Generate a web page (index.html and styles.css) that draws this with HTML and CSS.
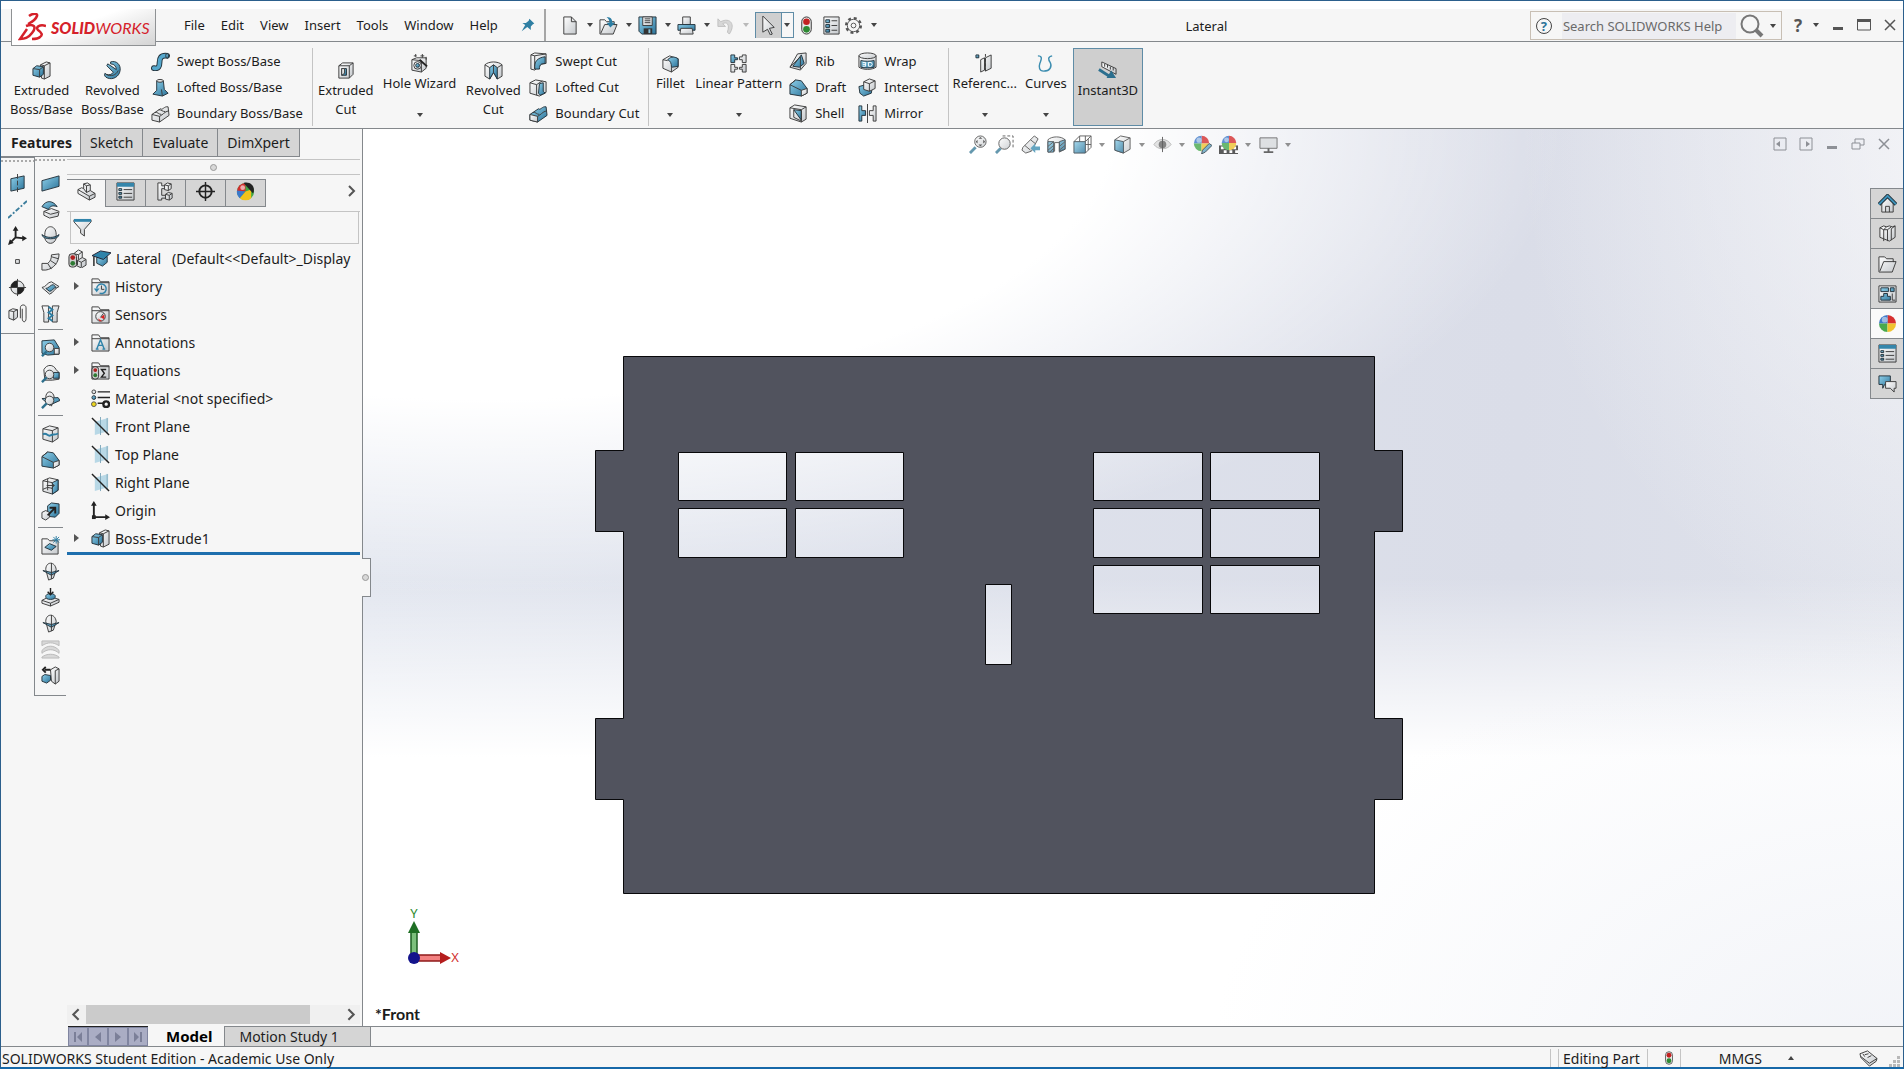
FILE: index.html
```html
<!DOCTYPE html>
<html lang="en">
<head>
    <meta charset="UTF-8">
    <meta name="viewport" content="width=device-width, initial-scale=1.0">
    <title>SOLIDWORKS - Lateral</title>
    <link rel="stylesheet" href="styles.css">
</head>
<body>
    <!-- icon sprite -->
    <svg class="sprite" aria-hidden="true">
        <linearGradient id="steel" x1="0" y1="0" x2="1" y2="1"><stop offset="0" stop-color="#8fd0ea"/><stop offset="1" stop-color="#2b7399"/></linearGradient>
        <linearGradient id="silver" x1="0" y1="0" x2="1" y2="1"><stop offset="0" stop-color="#fff"/><stop offset="1" stop-color="#c4c8cc"/></linearGradient>

        <symbol id="i-extrude" viewBox="0 0 20 20"><path class="w" d="M9 4l6-3 4 1v14l-6 3-3-1z"/><path class="k" d="M13 19V5l6-3M13 5L9 4"/><path class="b" d="M1 8l4-3 7 1v8l-4 3-7-2z"/><path class="k" d="M1 8l7 1v8M8 9l4-3"/></symbol>
        <symbol id="i-revolve" viewBox="0 0 20 20"><path class="b" d="M8 1c6-2 11 3 10 9-1 7-8 10-13 8-3-1-4-3-3-5 2 2 6 2 8 0 1-1 1-2 0-2L4 5l1-2 9 6c0-3-2-6-6-6z"/><path class="k" d="M3 14c5 3 11 1 13-4"/></symbol>
        <symbol id="i-sweep" viewBox="0 0 20 20"><path d="M3 17c5 1 6-2 6-6s1-8 8-7" fill="none" stroke="#24333c" stroke-width="6" stroke-linecap="round"/><path d="M3 17c5 1 6-2 6-6s1-8 8-7" fill="none" stroke="#55a7cc" stroke-width="4" stroke-linecap="round"/><ellipse class="b" cx="17" cy="4" rx="1.500" ry="2.500"/></symbol>
        <symbol id="i-loft" viewBox="0 0 20 20"><path class="b" d="M6 3h7l1 9 4 4-6 3-10-2 4-4z"/><ellipse class="w" cx="9.500" cy="3" rx="3.500" ry="1.500"/><path class="k" d="M12 19l-1-7"/></symbol>
        <symbol id="i-boundary" viewBox="0 0 20 20"><path class="w" d="M1 11l9-6c2 2 4-3 8-2l1 9-10 7-8-2z"/><path class="k" d="M1 11l8 2v6M9 13c3-1 5-5 10-6M4 9c3-1 4 2 7 2M8 6c3 0 4 2 7 2"/></symbol>
        <symbol id="i-boundary-cut" viewBox="0 0 20 20"><path class="b" d="M1 11l9-6c2 2 4-3 8-2l1 9-10 7-8-2z"/><path class="w" d="M1 11l8 2v6l-8-2z"/><path class="k" d="M9 13c3-1 5-5 10-6M4 9c3-1 4 2 7 2"/></symbol>
        <symbol id="i-excut" viewBox="0 0 20 20"><path class="w" d="M3 5l4-3h11v12l-4 4H3z"/><path class="k" d="M3 5h11v13M14 5l4-3"/><path class="b" d="M6 8h5v7H6z"/><path class="w" d="M6 8h3v5l-3 2z"/></symbol>
        <symbol id="i-hole" viewBox="0 0 20 20"><path class="w" d="M2 6l5-2h10v11l-5 4-10-2z"/><path class="k" d="M2 6l10 1v12"/><circle class="w" cx="8" cy="12" r="4"/><circle class="b" cx="8" cy="12" r="2"/><path d="M10 6l8 7" stroke="#222" stroke-width="2"/><path class="k" d="M6 0v3M4 2h3M13 0v4M11 2h4M17 3v3"/></symbol>
        <symbol id="i-revcut" viewBox="0 0 20 20"><path class="w" d="M1 4c4-4 14-4 18 0v12l-5 3-4-7-4 7-5-3z"/><path class="b" d="M10 4L6 7v12l4-7 4 7V7z"/><path class="k" d="M1 4l5 3M19 4l-5 3M10 4v8"/></symbol>
        <symbol id="i-swcut" viewBox="0 0 20 20"><path class="w" d="M2 3l4-2 12 1v10l-5 1-7 6-4-1z"/><path class="b" d="M6 18c-1-8 3-12 11-13v7c-4 0-6 1-6 6z"/><path class="k" d="M2 3l4 1v14M6 4l12-2"/></symbol>
        <symbol id="i-locut" viewBox="0 0 20 20"><path class="w" d="M1 5l6-3 11 2v11l-7 4-10-3z"/><path class="k" d="M1 5l7 2v11M8 7l6-4"/><path class="b" d="M11 6l4-1v9l2 2-5 2-2-2z"/></symbol>
        <symbol id="i-fillet" viewBox="0 0 20 20"><path class="w" d="M2 6l7-4 9 3v9l-7 5-9-4z"/><path class="b" d="M7 6c4-4 8-3 11-1v8l-7 1c0-4-1-7-4-8z"/><path class="k" d="M2 6l5 1M11 14v5"/></symbol>
        <symbol id="i-pattern" viewBox="0 0 20 20"><path class="b" d="M2 1h4v3h3v2H6v3H2z"/><path class="w" d="M11 3h3V1h4v8h-4V6h-3zM2 11h4v3h3v2H6v3H2zM11 14h3v-3h4v8h-4v-3h-3z"/></symbol>
        <symbol id="i-rib" viewBox="0 0 20 20"><path class="w" d="M9 2l9-1v11l-6 7-11-3z"/><path class="b" d="M13 3l3 9-5 4-7-1z"/><path class="k" d="M1 16L12 5M12 18V5"/></symbol>
        <symbol id="i-draft" viewBox="0 0 20 20"><path class="b" d="M1 7l6-5 6 1 6 8v5l-6 3-12-2z"/><path class="w" d="M13 13l6-2v5l-6 3z"/><path class="k" d="M1 7l12 6M1 7l6-5"/></symbol>
        <symbol id="i-shell" viewBox="0 0 20 20"><path class="w" d="M1 4l5-3 12 2v13l-5 3L1 15z"/><path class="b" d="M5 6l8 1v10z"/><path class="k" d="M1 4l12 2v13M13 6l5-3M5 6v8l8 4"/></symbol>
        <symbol id="i-wrap" viewBox="0 0 20 20"><path class="w" d="M1 4v12c4 3 14 3 18 0V4z"/><ellipse class="w" cx="10" cy="4" rx="9" ry="3"/><path class="b" d="M3 9c4 1 10 1 14 0v7c-4 1-10 1-14 0z"/><path d="M5 11h3v4H5M5 13h3M11 11v4h3l1-2-1-2z" stroke="#fff" fill="none"/></symbol>
        <symbol id="i-intersect" viewBox="0 0 20 20"><path class="b" d="M1 9l11-3 3 4-1 6-8 3-4-3z"/><path class="w" d="M6 4l6-3 6 2v8l-6 3-6-2z"/><path class="k" d="M6 4l6 2v8M12 6l6-3"/></symbol>
        <symbol id="i-mirror" viewBox="0 0 20 20"><path class="b" d="M1 2h3v5h4v5H4v6H1z"/><path class="w" d="M19 2h-3v5h-4v5h4v6h3z"/><path class="k" d="M10 0v20"/></symbol>
        <symbol id="i-refgeo" viewBox="0 0 20 20"><path class="b" d="M1 1h3v3H1z"/><path class="w" d="M6 6l4-2v13l-4 2zM11 4l6-3v14l-6 3z"/><path class="k" d="M11 0v20" stroke-dasharray="3 2"/></symbol>
        <symbol id="i-curves" viewBox="0 0 20 20"><path d="M2 2c6 0 3 5 2 8s-1 8 4 8M17 2c-5 1-4 4-2 7 2 4 0 9-7 9" fill="none" stroke="#3c8db0" stroke-width="1.500"/></symbol>
        <symbol id="i-instant" viewBox="0 0 20 20"><path class="w" d="M4 1l15 7v6L4 6z"/><path class="k" d="M7 3v3M10 4v3M13 6v3M16 7v3"/><path d="M1 9l11 7" stroke="#2b6f8f" stroke-width="3"/><path d="M9 18h10l-5-8z" fill="#2b6f8f"/></symbol>

        <symbol id="i-new" viewBox="0 0 20 20"><path class="w" d="M4 1h8l5 5v13H4z"/><path class="k" d="M12 1v5h5"/></symbol>
        <symbol id="i-open" viewBox="0 0 20 20"><path class="w" d="M1 18V4h5l2 2h8v3h3l-4 10H1z"/><path class="k" d="M2 18L6 9h12"/><path d="M8 1c5 0 6 3 6 6h3l-5 5-4-5h3c0-3-1-4-3-6z" fill="#2b7da3"/></symbol>
        <symbol id="i-save" viewBox="0 0 20 20"><path class="b" d="M1 1h18v18H4l-3-3z"/><path class="w" d="M5 1h10v9H5z"/><path class="k" d="M7 3h6M7 5h6M7 7h6"/><path d="M6 13h9v6H6z" fill="#333"/><path d="M11 14h2v4h-2z" fill="#8cc6df"/></symbol>
        <symbol id="i-print" viewBox="0 0 20 20"><path class="w" d="M6 1h8v8H6z"/><path class="b" d="M1 9h18v6H1z"/><path class="w" d="M4 13h12l1 6H3z"/></symbol>
        <symbol id="i-undo" viewBox="0 0 20 20"><path d="M2 3v8h8L7 8c4-2 8 0 5 9l2 2C21 9 15 1 5 6z" fill="#d0d0d0" stroke="#b4b4b4"/></symbol>
        <symbol id="i-pointer" viewBox="0 0 20 20"><path class="w" d="M4 0l12 12-5 1 3 6-2 1-3-6-5 3z"/></symbol>
        <symbol id="i-traffic" viewBox="0 0 20 20"><rect x="5" y="1" width="10" height="18" rx="5" fill="#e8e8e8" stroke="#333"/><circle cx="10" cy="6" r="3.500" fill="#c32121"/><circle cx="10" cy="14" r="3.500" fill="#2d8a33"/></symbol>
        <symbol id="i-list" viewBox="0 0 20 20"><path class="w" d="M2 1h16v18H2z"/><path class="b" d="M4 4h4v3H4zM4 9h4v3H4zM4 14h4v3H4z"/><path class="k" d="M10 5h6M10 10h6M10 15h6"/></symbol>
        <symbol id="i-gear" viewBox="0 0 20 20"><circle cx="10" cy="10" r="7.500" fill="none" stroke="#555" stroke-width="3" stroke-dasharray="3 2.900"/><circle cx="10" cy="10" r="6.500" fill="#f6f6f6" stroke="#555"/><circle cx="10" cy="10" r="2.500" fill="none" stroke="#555"/></symbol>
        <symbol id="i-pin" viewBox="0 0 20 20"><path d="M12 1l7 7-2 1-3 3v5l-5-4-8 6 5-9-4-3h5l4-3z" fill="#2f7fa3"/></symbol>
        <symbol id="i-lens" viewBox="0 0 24 24"><circle cx="10" cy="10" r="8.500" fill="none" stroke="#777" stroke-width="2"/><path d="M16 16l6 6" stroke="#777" stroke-width="4"/></symbol>
        <symbol id="i-min" viewBox="0 0 14 14"><path d="M2 9h10v3H2z" fill="currentColor"/></symbol>
        <symbol id="i-max" viewBox="0 0 14 14"><path d="M.5 2h13v10H.5z" fill="none" stroke="currentColor"/><path d="M0 1h14v3H0z" fill="currentColor"/></symbol>
        <symbol id="i-close" viewBox="0 0 14 14"><path d="M2 2l10 10M12 2L2 12" stroke="currentColor" stroke-width="1.500"/></symbol>
        <symbol id="i-restore" viewBox="0 0 14 14"><path d="M1 6h8v6H1zM4 6V2h9v6H9" fill="none" stroke="currentColor"/></symbol>
        <symbol id="i-dockl" viewBox="0 0 14 14"><path d="M1 1h12v12H1z" fill="none" stroke="currentColor"/><path d="M7 4v6L3 7z" fill="currentColor"/></symbol>
        <symbol id="i-dockr" viewBox="0 0 14 14"><path d="M1 1h12v12H1z" fill="none" stroke="currentColor"/><path d="M7 4v6l4-3z" fill="currentColor"/></symbol>

        <symbol id="i-zoomfit" viewBox="0 0 20 20"><path d="M1 19l6-6" stroke="#3f7f9b" stroke-width="3"/><circle class="w" cx="12" cy="7" r="6"/><path d="M12 2l2 2h-4zM12 12l2-2h-4zM7 7l2-2v4zM17 7l-2-2v4z" fill="#333"/></symbol>
        <symbol id="i-zoomarea" viewBox="0 0 20 20"><path class="k" d="M8 1h11v12" stroke-dasharray="3 2"/><path d="M1 19l5-5" stroke="#3f7f9b" stroke-width="3"/><circle class="w" cx="10" cy="9" r="6"/></symbol>
        <symbol id="i-zoomprev" viewBox="0 0 20 20"><path class="w" d="M2 13L14 1l4 3-7 13-6 2-4-3z"/><path class="k" d="M10 5l5 4M4 11l6 5"/><path d="M20 12v4h-5v3l-5-5 5-5v3z" fill="#3f8fb2"/></symbol>
        <symbol id="i-section" viewBox="0 0 20 20"><path class="w" d="M1 5c4-4 14-4 18 0v10l-6 3V8H8v9l-7 1z"/><path class="b" d="M1 7h6v11H1zM13 7l6-2v10l-6 2z"/><path class="k" d="M1 12l6-5M1 16l6-5M3 18l4-4M13 12l6-5M13 16l6-5"/></symbol>
        <symbol id="i-orient" viewBox="0 0 20 20"><path class="k" d="M1 7l6-6h12v12l-6 6M7 1v6M13 1v6M13 7l6-6M13 10h6M16 4v12"/><path class="b" d="M1 7h12v12H1z"/></symbol>
        <symbol id="i-style" viewBox="0 0 20 20"><path class="w" d="M2 5l6-4 10 2v12l-7 4-9-3z"/><path class="b" d="M2 5l9 2v12l-9-3z"/><path class="k" d="M11 7l7-4"/></symbol>
        <symbol id="i-eye" viewBox="0 0 20 20"><path d="M1 10c4-7 14-7 18 0-4 6-14 6-18 0z" fill="#ddd" stroke="#aaa"/><circle cx="10" cy="10" r="4" fill="#666"/><path class="k" d="M10 2v16"/></symbol>
        <symbol id="i-ball" viewBox="0 0 20 20"><circle cx="10" cy="10" r="9" fill="#3fa845"/><path d="M10 10L10 1a9 9 0 0 0-9 9z" fill="#d22c2c"/><path d="M10 10L1 9a9 9 0 0 0 3 8z" fill="#3b78c9"/><path d="M10 10l-6 7a9 9 0 0 0 12 0V8z" fill="#f2c21a"/><path d="M8 1l10 11c3-6-2-13-10-11z" fill="#222"/><circle cx="7" cy="6" r="2.500" fill="#fff" opacity=".6"/></symbol>
        <symbol id="i-sphere" viewBox="0 0 20 20"><path d="M10 10V1a9 9 0 0 1 9 9z" fill="#d63030"/><path d="M10 10V1a9 9 0 0 0-9 9z" fill="#3b78c9"/><path d="M10 10H1a9 9 0 0 0 9 9z" fill="#48a94d"/><path d="M10 10h9a9 9 0 0 1-9 9z" fill="#f0c330"/><circle cx="7" cy="6" r="3" fill="#fff" opacity=".5"/></symbol>
        <symbol id="i-appear" viewBox="0 0 20 20"><use href="#i-sphere" width="18" height="18"/><path class="b" d="M17 9l3 2-7 7-4 2 1-4z"/></symbol>
        <symbol id="i-scene" viewBox="0 0 20 20"><path d="M0 11h20v9H0z" fill="#333"/><path d="M2 12h3v3H2zM15 12h3v3h-3zM5 16h3v3H5zM11 16h3v3h-3zM17 16h3v3h-3z" fill="#fff"/><use href="#i-sphere" x="2" width="17" height="17"/></symbol>
        <symbol id="i-monitor" viewBox="0 0 20 20"><path d="M1 3h18v11H1z" fill="#d9dcdf" stroke="#555"/><path d="M9 14h2v3h4v2H5v-2h4z" fill="#444"/></symbol>

        <symbol id="i-plane2" viewBox="0 0 20 20"><path class="b" d="M3 5l14-3v13L3 18z"/><path class="k" d="M10 0v20" stroke-dasharray="5 2"/></symbol>
        <symbol id="i-axis" viewBox="0 0 20 20"><path d="M0 19L20 1" stroke="#3b7d9c" stroke-width="2" stroke-dasharray="5 2 2 2"/></symbol>
        <symbol id="i-coord" viewBox="0 0 20 20"><path d="M8 2v10l9 1M8 12l-6 6" fill="none" stroke="#222" stroke-width="2"/><path d="M8 0l3 5H5zM20 13l-5-3v6zM0 20l2-6 4 4z" fill="#222"/></symbol>
        <symbol id="i-point" viewBox="0 0 20 20"><path class="w" d="M8 8h4v4H8z"/></symbol>
        <symbol id="i-mass" viewBox="0 0 20 20"><circle class="w" cx="10" cy="10" r="7"/><path d="M10 10V3a7 7 0 0 0-7 7zM10 10v7a7 7 0 0 0 7-7z" fill="#222"/><path class="k" d="M10 1v18M1 10h18"/></symbol>
        <symbol id="i-mate" viewBox="0 0 20 20"><path class="w" d="M1 7l4-2 5 1v8l-4 3-5-2z"/><path class="k" d="M1 7l5 1v9M6 8l4-2M13 15V4c0-4 6-4 6 0v11c0 5-4 5-4 0V5"/></symbol>

        <symbol id="i-surf" viewBox="0 0 20 20"><path class="b" d="M1 7l18-5v11L1 18z"/></symbol>
        <symbol id="i-surf-rev" viewBox="0 0 20 20"><path class="w" d="M3 12l8-3 8 3-1 5-9 2-6-3z"/><path class="b" d="M1 7c5-8 12-6 16 0-5-2-8 0-9 3z"/><path class="k" d="M3 12l7 3 8-2"/></symbol>
        <symbol id="i-dome" viewBox="0 0 20 20"><path class="w" d="M4 9c0-11 12-11 12 0v4c-2 7-10 7-12 0z"/><path class="b" d="M1 9c5 4 13 4 18 0 0 6-18 6-18 0z"/></symbol>
        <symbol id="i-sweep2" viewBox="0 0 20 20"><path class="w" d="M1 12l6 0c3-2 4-5 4-9l8-1c0 9-6 16-14 17H1z"/><path class="k" d="M7 12l4 6M10 9l6 4M11 5l7 2"/></symbol>
        <symbol id="i-offset" viewBox="0 0 20 20"><path class="w" d="M1 10c4 0 6-6 10-6l8 5c-4 1-6 7-10 8z"/><path class="b" d="M5 11c3 0 5-4 8-4l3 3c-3 0-4 4-7 4z"/></symbol>
        <symbol id="i-knit" viewBox="0 0 20 20"><path class="w" d="M1 2h7v17H3V9zM19 2h-7v17h5V9z"/><path d="M8 3l4 3-4 3 4 3-4 3 4 3" fill="none" stroke="#2e7ea3" stroke-width="2"/></symbol>
        <symbol id="i-check1" viewBox="0 0 20 20"><path class="b" d="M1 3l13-1 5 8v7l-12 1-6-2z"/><path class="w" d="M14 11h5v6h-5z"/><circle class="w" cx="9" cy="10" r="4.500"/><path d="M1 19l5-5" stroke="#2e6f8c" stroke-width="2.500"/></symbol>
        <symbol id="i-check2" viewBox="0 0 20 20"><path class="w" d="M3 6c3-6 10-6 13 0l3 3v7l-7 1H4z"/><path class="b" d="M13 9h6v6h-6z"/><circle class="w" cx="9" cy="11" r="4.500"/><path d="M1 19l5-5" stroke="#2e6f8c" stroke-width="2.500"/></symbol>
        <symbol id="i-check3" viewBox="0 0 20 20"><path class="w" d="M5 8c0-8 8-8 9 0l-3 9z"/><path class="b" d="M1 9l17-1 2 3-11 5z"/><circle class="w" cx="9" cy="11" r="4.500"/><path d="M1 19l5-5" stroke="#2e6f8c" stroke-width="2.500"/></symbol>
        <symbol id="i-split" viewBox="0 0 20 20"><path class="w" d="M2 5l7-3 9 2v11l-6 4-10-3z"/><path class="k" d="M2 5l10 2v12M12 7l6-3"/><path d="M2 11c4-3 5 3 8 1s4 0 8-2" fill="none" stroke="#2e7ea3" stroke-width="2"/></symbol>
        <symbol id="i-move" viewBox="0 0 20 20"><path class="w" d="M2 5l7-3 9 2v11l-6 4-10-3z"/><path class="b" d="M12 7l6-3v11l-6 4z"/><path class="k" d="M2 5l10 2M7 3v12M2 14l5-2 5 1M6 10h8M11 7l3 3-3 3"/></symbol>
        <symbol id="i-scale" viewBox="0 0 20 20"><path class="b" d="M7 4l4-3 8 1v10l-4 4-8-1z"/><path class="w" d="M1 11l4-2 4 2v5l-4 3-4-2z"/><path d="M7 14l7-7M9 6h6v6" fill="none" stroke="#222" stroke-width="2"/></symbol>
        <symbol id="i-folder-surf" viewBox="0 0 20 20"><path class="w" d="M1 3h6l2 2h9v14H1z"/><path class="b" d="M4 12l5-4 7 3-5 4z"/><path d="M16 0v8M12 4h8M13 1l6 6M19 1l-6 6" stroke="#2e7ea3"/></symbol>
        <symbol id="i-cross" viewBox="0 0 20 20"><path class="w" d="M5 8c0-9 10-9 11 0l-3 9-5 2z"/><path class="b" d="M2 9l9 2 8-2-8 5z"/><path class="k" d="M11 1v17"/></symbol>
        <symbol id="i-indent" viewBox="0 0 20 20"><path class="w" d="M1 13l8-4 10 3v3l-9 4-9-3z"/><path class="k" d="M1 13l9 3v3M10 16l9-4"/><ellipse class="b" cx="10" cy="9" rx="5" ry="3"/><path d="M10 0v6M7 4l3 3 3-3" stroke="#222" fill="none" stroke-width="1.500"/></symbol>
        <symbol id="i-thicken" viewBox="0 0 20 20"><path fill="#d8d8d8" stroke="#b8b8b8" d="M1 1h18v5c-6-4-12-4-18 0zM1 11c5-6 13-6 18 0v3c-5-5-13-5-18 0zM1 19v-1c5-4 13-4 18 0v1z"/></symbol>
        <symbol id="i-delface" viewBox="0 0 20 20"><path class="w" d="M10 4l5-3 4 2v13l-4 3-4-3z"/><path class="b" d="M1 11l3-2 6 1v5l-4 3-5-2z"/><path class="k" d="M15 19V5l4-2"/><path d="M4 4h6M5 1L2 4l3 3" fill="none" stroke="#222" stroke-width="2"/></symbol>

        <symbol id="i-part" viewBox="0 0 20 20"><path class="w" d="M1 8l4-2 2 1V2l4-1 3 2v6l5 3v4l-6 3-12-7z"/><path class="k" d="M1 8l12 7v4M13 15l6-3M7 7l3 4 4-2M7 2l3 2v7M10 4l4-1"/></symbol>
        <symbol id="i-props" viewBox="0 0 20 20"><path class="w" d="M1 1h18v18H1z"/><path d="M1 1h18v4H1z" fill="#3586ab"/><path class="b" d="M3 7h3v2H3zM3 11h3v2H3zM3 15h3v2H3z"/><path class="k" d="M8 8h9M8 12h9M8 16h9"/></symbol>
        <symbol id="i-config" viewBox="0 0 20 20"><path class="w" d="M2 1h4v3h4v3H6v7h4v3H6v2H2z"/><path class="w" d="M9 3l3-2 4 1v5l-3 2-4-1zM10 13l3-2 4 1v5l-3 2-4-1z"/><path class="k" d="M9 3l4 1v5M13 4l3-2M10 13l4 1v5M14 14l3-2"/></symbol>
        <symbol id="i-target" viewBox="0 0 20 20"><circle cx="10" cy="10" r="6.500" fill="none" stroke="#222" stroke-width="2"/><path d="M10 0v20M0 10h20" stroke="#222" stroke-width="1.500"/></symbol>
        <symbol id="i-funnel" viewBox="0 0 20 20"><path class="w" d="M1 2h18v2l-7 8v7l-4-3v-4L1 4z"/><path d="M1 1h18v3H1z" fill="#2f83aa"/></symbol>
        <symbol id="i-rebuild" viewBox="0 0 20 20"><path class="w" d="M6 5l5-4 4 2v6l4 2v6l-5 3-6-3z"/><path class="k" d="M15 9l-5 3v5M6 5l5 1v5M11 6l4-3M10 12l4 2v5M14 14l5-3"/><rect x="1" y="5" width="8" height="14" rx="3" fill="#ccc" stroke="#333"/><circle cx="5" cy="9" r="2.500" fill="#b02121"/><circle cx="5" cy="15" r="2.500" fill="#2d7a33"/></symbol>
        <symbol id="i-cap" viewBox="0 0 20 20"><path class="b" d="M5 9v6l6 3 5-4V8z"/><path d="M0 7l9-5 11 2-8 7z" fill="#2f83aa" stroke="#223"/><path d="M2 8v10" stroke="#222" stroke-width="1.500"/></symbol>
        <symbol id="i-folder" viewBox="0 0 20 20"><path class="w" d="M1 3V2h7l2 3h9v14H1z"/><path class="k" d="M1 6h18"/></symbol>
        <symbol id="i-history" viewBox="0 0 20 20"><use href="#i-folder"/><path d="M6 12a5 5 0 1 1 3 5" fill="none" stroke="#2f83aa" stroke-width="1.500"/><path d="M3 12h6l-3 4z" fill="#2f83aa"/><path class="k" d="M11 9v4h3"/></symbol>
        <symbol id="i-sensors" viewBox="0 0 20 20"><use href="#i-folder"/><circle class="w" cx="10" cy="12" r="5"/><path d="M10 13l4-3v5zM7 14l2 3h3z" fill="#d22"/><path class="k" d="M10 13l3-4"/></symbol>
        <symbol id="i-annot" viewBox="0 0 20 20"><use href="#i-folder"/><path d="M6 17l4-10 4 10M7 13h6M5 17h3M12 17h3" fill="none" stroke="#2f83aa" stroke-width="1.500"/></symbol>
        <symbol id="i-equ" viewBox="0 0 20 20"><use href="#i-folder"/><path d="M16 9h-5l3 4-3 4h5" fill="none" stroke="#222" stroke-width="1.500"/><rect x="1" y="6" width="7" height="13" rx="3" fill="#ccc" stroke="#333"/><circle cx="4.500" cy="9.500" r="2" fill="#b02121"/><circle cx="4.500" cy="15" r="2" fill="#2d7a33"/></symbol>
        <symbol id="i-material" viewBox="0 0 20 20"><path d="M7 3h13M7 9h13M7 15h7" stroke="#222" stroke-width="1.500"/><circle class="w" cx="3" cy="3" r="2"/><circle class="b" cx="3" cy="9" r="2"/><circle cx="3" cy="16" r="2.500" fill="#ead31c" stroke="#555"/><circle cx="16" cy="16" r="3" fill="none" stroke="#222" stroke-width="2.500"/></symbol>
        <symbol id="i-plane" viewBox="0 0 20 20"><path d="M4 5l14-4v14L4 19z" fill="#b8d8e6"/><path d="M10 0v19M17 1v16" stroke="#7fa8bb"/><path d="M1 1l18 18" stroke="#222" stroke-width="1.500"/></symbol>
        <symbol id="i-origin" viewBox="0 0 20 20"><path d="M3 2v15h15" fill="none" stroke="#222" stroke-width="2"/><path d="M3 0l3 5H0zM20 17l-5-3v6z" fill="#222"/><path d="M1 15h4v4H1z" fill="#222"/></symbol>

        <symbol id="i-home" viewBox="0 0 20 20"><path class="w" d="M4 9l6-6 6 6v10H4z"/><path d="M1 11l9-9 9 9" fill="none" stroke="#24333c" stroke-width="4"/><path d="M1 11l9-9 9 9" fill="none" stroke="#3d93bb" stroke-width="2"/><path class="k" d="M8 19v-6h4v6"/></symbol>
        <symbol id="i-books" viewBox="0 0 20 20"><path class="w" d="M2 4l4-2 3 1 3-1 3 1 3-1v12l-6 4-10-4z"/><path class="k" d="M2 4l4 2v12M6 6l3-3M10 6v12M10 6l4-3M14 5v12M14 5l4-3M6 6h4"/></symbol>
        <symbol id="i-folder2" viewBox="0 0 20 20"><path class="w" d="M1 18V3h6l2 2h7v3h3l-4 11H1z"/><path class="k" d="M2 18L6 8h11"/></symbol>
        <symbol id="i-palette" viewBox="0 0 20 20"><path class="w" d="M1 2h18v17H1z"/><path class="b" d="M3 4h8v4H3zM13 4h4v4h-4zM6 10h4v3h3v4H3v-4h3z"/><path class="k" d="M15 10v7h3"/></symbol>
        <symbol id="i-chat" viewBox="0 0 20 20"><path class="b" d="M1 2h12v9H7l-2 4v-4H1z"/><path class="w" d="M8 8h11v7h-2v4l-4-4H8z"/></symbol>
        <symbol id="i-tag" viewBox="0 0 20 20"><path class="w" d="M1 5l8-3 10 8-1 3-7 5L2 9z"/><path class="k" d="M2 8l9 7 8-5M6 6l4-1M9 9l4-2M4 5l2 3"/></symbol>
    </svg>

    <div class="window">
        <header class="titlebar">
            <div class="logo">
                <svg class="logo-mark" viewBox="0 0 28 28" fill="none" stroke="#d5212a" stroke-width="2.500"><path d="M11 3C15 0 20 0 19 3c-1 3-5 6-9 8M8 13c8-3 11 1 6 7-3 4-8 6-12 6l7-10M28 13c-6-2-11 1-8 4 4 3 5 5 2 7-2 2-6 2-8 2"/></svg>
                <span><b>SOLID</b>WORKS</span>
            </div>
            <nav class="menu">
                <button>File</button>
                <button>Edit</button>
                <button>View</button>
                <button>Insert</button>
                <button>Tools</button>
                <button>Window</button>
                <button>Help</button>
            </nav>
            <button class="pin" aria-label="Pin menu"><svg class="icon-s"><use href="#i-pin"/></svg></button>
            <div class="quick">
                <button class="split" aria-label="New"><svg class="icon"><use href="#i-new"/></svg><i class="caret"></i></button>
                <button class="split" aria-label="Open"><svg class="icon"><use href="#i-open"/></svg><i class="caret"></i></button>
                <button class="split" aria-label="Save"><svg class="icon"><use href="#i-save"/></svg><i class="caret"></i></button>
                <button class="split" aria-label="Print"><svg class="icon"><use href="#i-print"/></svg><i class="caret"></i></button>
                <button class="split off" aria-label="Undo"><svg class="icon"><use href="#i-undo"/></svg><i class="caret"></i></button>
                <button class="split pressed" aria-label="Select"><span><svg class="icon"><use href="#i-pointer"/></svg></span><i class="caret"></i></button>
                <button class="single" aria-label="Rebuild"><svg class="icon"><use href="#i-traffic"/></svg></button>
                <button class="single" aria-label="File properties"><svg class="icon"><use href="#i-list"/></svg></button>
                <button class="split" aria-label="Options"><svg class="icon"><use href="#i-gear"/></svg><i class="caret"></i></button>
            </div>
            <div class="doc-title">Lateral</div>
            <div class="search">
                <span class="help-dot">?</span>
                <input type="text" aria-label="Search help" placeholder="Search SOLIDWORKS Help">
                <button aria-label="Search"><svg class="icon-l"><use href="#i-lens"/></svg><i class="caret"></i></button>
            </div>
            <div class="win-controls">
                <button class="help" aria-label="Help">?<i class="caret"></i></button>
                <button aria-label="Minimize"><svg class="icon-s"><use href="#i-min"/></svg></button>
                <button aria-label="Maximize"><svg class="icon-s"><use href="#i-max"/></svg></button>
                <button aria-label="Close"><svg class="icon-s"><use href="#i-close"/></svg></button>
            </div>
        </header>

        <div class="ribbon">
            <div class="group">
                <button class="big"><svg class="icon"><use href="#i-extrude"/></svg><span>Extruded<br>Boss/Base</span></button>
                <button class="big"><svg class="icon"><use href="#i-revolve"/></svg><span>Revolved<br>Boss/Base</span></button>
                <div class="stack">
                    <button><svg class="icon"><use href="#i-sweep"/></svg>Swept Boss/Base</button>
                    <button><svg class="icon"><use href="#i-loft"/></svg>Lofted Boss/Base</button>
                    <button><svg class="icon"><use href="#i-boundary"/></svg>Boundary Boss/Base</button>
                </div>
            </div>
            <div class="group">
                <button class="big"><svg class="icon"><use href="#i-excut"/></svg><span>Extruded<br>Cut</span></button>
                <button class="big drop"><svg class="icon"><use href="#i-hole"/></svg><span>Hole Wizard</span><i class="caret"></i></button>
                <button class="big"><svg class="icon"><use href="#i-revcut"/></svg><span>Revolved<br>Cut</span></button>
                <div class="stack">
                    <button><svg class="icon"><use href="#i-swcut"/></svg>Swept Cut</button>
                    <button><svg class="icon"><use href="#i-locut"/></svg>Lofted Cut</button>
                    <button><svg class="icon"><use href="#i-boundary-cut"/></svg>Boundary Cut</button>
                </div>
            </div>
            <div class="group">
                <button class="big drop"><svg class="icon"><use href="#i-fillet"/></svg><span>Fillet</span><i class="caret"></i></button>
                <button class="big drop"><svg class="icon"><use href="#i-pattern"/></svg><span>Linear Pattern</span><i class="caret"></i></button>
                <div class="stack">
                    <button><svg class="icon"><use href="#i-rib"/></svg>Rib</button>
                    <button><svg class="icon"><use href="#i-draft"/></svg>Draft</button>
                    <button><svg class="icon"><use href="#i-shell"/></svg>Shell</button>
                </div>
                <div class="stack">
                    <button><svg class="icon"><use href="#i-wrap"/></svg>Wrap</button>
                    <button><svg class="icon"><use href="#i-intersect"/></svg>Intersect</button>
                    <button><svg class="icon"><use href="#i-mirror"/></svg>Mirror</button>
                </div>
            </div>
            <div class="group last">
                <button class="big drop"><svg class="icon"><use href="#i-refgeo"/></svg><span>Referenc...</span><i class="caret"></i></button>
                <button class="big drop"><svg class="icon"><use href="#i-curves"/></svg><span>Curves</span><i class="caret"></i></button>
                <button class="big active"><svg class="icon"><use href="#i-instant"/></svg><span>Instant3D</span></button>
            </div>
        </div>

        <main class="workspace">
            <aside class="side">
                <div class="cmd-tabs">
                    <button class="current">Features</button>
                    <button>Sketch</button>
                    <button>Evaluate</button>
                    <button>DimXpert</button>
                </div>
                <div class="side-body">
                    <div class="tools tools-ref">
                        <button aria-label="Plane"><svg class="icon"><use href="#i-plane2"/></svg></button>
                        <button aria-label="Axis"><svg class="icon"><use href="#i-axis"/></svg></button>
                        <button aria-label="Coordinate system"><svg class="icon"><use href="#i-coord"/></svg></button>
                        <button aria-label="Point"><svg class="icon"><use href="#i-point"/></svg></button>
                        <button aria-label="Center of mass"><svg class="icon"><use href="#i-mass"/></svg></button>
                        <button aria-label="Mate reference"><svg class="icon"><use href="#i-mate"/></svg></button>
                    </div>
                    <div class="tools tools-surf">
                        <button aria-label="Planar surface"><svg class="icon"><use href="#i-surf"/></svg></button>
                        <button aria-label="Extruded surface"><svg class="icon"><use href="#i-surf-rev"/></svg></button>
                        <button aria-label="Revolved surface"><svg class="icon"><use href="#i-dome"/></svg></button>
                        <button aria-label="Swept surface"><svg class="icon"><use href="#i-sweep2"/></svg></button>
                        <button aria-label="Offset surface"><svg class="icon"><use href="#i-offset"/></svg></button>
                        <button aria-label="Knit surface"><svg class="icon"><use href="#i-knit"/></svg></button>
                        <hr>
                        <button aria-label="Draft analysis"><svg class="icon"><use href="#i-check1"/></svg></button>
                        <button aria-label="Undercut analysis"><svg class="icon"><use href="#i-check2"/></svg></button>
                        <button aria-label="Parting line analysis"><svg class="icon"><use href="#i-check3"/></svg></button>
                        <hr>
                        <button aria-label="Split line"><svg class="icon"><use href="#i-split"/></svg></button>
                        <button aria-label="Draft"><svg class="icon"><use href="#i-draft"/></svg></button>
                        <button aria-label="Move face"><svg class="icon"><use href="#i-move"/></svg></button>
                        <button aria-label="Scale"><svg class="icon"><use href="#i-scale"/></svg></button>
                        <hr>
                        <button aria-label="Insert mold folders"><svg class="icon"><use href="#i-folder-surf"/></svg></button>
                        <button aria-label="Parting lines"><svg class="icon"><use href="#i-cross"/></svg></button>
                        <button aria-label="Shut-off surfaces"><svg class="icon"><use href="#i-indent"/></svg></button>
                        <button aria-label="Parting surfaces"><svg class="icon"><use href="#i-cross"/></svg></button>
                        <button aria-label="Ruled surface"><svg class="icon"><use href="#i-thicken"/></svg></button>
                        <button aria-label="Core"><svg class="icon"><use href="#i-delface"/></svg></button>
                    </div>
                    <section class="manager">
                        <div class="splitbar"><i class="dot"></i></div>
                        <div class="manager-tabs">
                            <button class="current" aria-label="Feature tree"><svg class="icon"><use href="#i-part"/></svg></button>
                            <button aria-label="Properties"><svg class="icon"><use href="#i-props"/></svg></button>
                            <button aria-label="Configurations"><svg class="icon"><use href="#i-config"/></svg></button>
                            <button aria-label="DimXpert"><svg class="icon"><use href="#i-target"/></svg></button>
                            <button aria-label="Display"><svg class="icon"><use href="#i-ball"/></svg></button>
                            <button class="more" aria-label="More"><svg class="icon-s" viewBox="0 0 14 14"><path d="M5 2l5 5-5 5" fill="none" stroke="#555" stroke-width="2"/></svg></button>
                        </div>
                        <label class="filter"><svg class="icon"><use href="#i-funnel"/></svg><input type="text" aria-label="Filter tree"></label>
                        <ul class="tree">
                            <li class="root"><svg class="icon"><use href="#i-rebuild"/></svg><svg class="icon"><use href="#i-cap"/></svg>Lateral&nbsp;&nbsp; (Default&lt;&lt;Default&gt;_Display</li>
                            <li class="open"><svg class="icon"><use href="#i-history"/></svg>History</li>
                            <li><svg class="icon"><use href="#i-sensors"/></svg>Sensors</li>
                            <li class="open"><svg class="icon"><use href="#i-annot"/></svg>Annotations</li>
                            <li class="open"><svg class="icon"><use href="#i-equ"/></svg>Equations</li>
                            <li><svg class="icon"><use href="#i-material"/></svg>Material &lt;not specified&gt;</li>
                            <li><svg class="icon"><use href="#i-plane"/></svg>Front Plane</li>
                            <li><svg class="icon"><use href="#i-plane"/></svg>Top Plane</li>
                            <li><svg class="icon"><use href="#i-plane"/></svg>Right Plane</li>
                            <li><svg class="icon"><use href="#i-origin"/></svg>Origin</li>
                            <li class="open"><svg class="icon"><use href="#i-extrude"/></svg>Boss-Extrude1</li>
                        </ul>
                        <div class="scrollbar">
                            <svg viewBox="0 0 18 18"><path d="M11 4L6 9l5 5" fill="none" stroke="#555" stroke-width="2"/></svg>
                            <div class="track"><div class="thumb"></div></div>
                            <svg viewBox="0 0 18 18"><path d="M7 4l5 5-5 5" fill="none" stroke="#555" stroke-width="2"/></svg>
                        </div>
                    </section>
                </div>
                <div class="handle"><i class="dot"></i></div>
            </aside>

            <section class="viewport">
                <div class="view-bar">
                    <div class="view-tools">
                        <button aria-label="Zoom to fit"><svg class="icon"><use href="#i-zoomfit"/></svg></button>
                        <button aria-label="Zoom to area"><svg class="icon"><use href="#i-zoomarea"/></svg></button>
                        <button aria-label="Previous view"><svg class="icon"><use href="#i-zoomprev"/></svg></button>
                        <button aria-label="Section view"><svg class="icon"><use href="#i-section"/></svg></button>
                        <button aria-label="View orientation"><svg class="icon"><use href="#i-orient"/></svg><i class="caret"></i></button>
                        <button aria-label="Display style"><svg class="icon"><use href="#i-style"/></svg><i class="caret"></i></button>
                        <button aria-label="Hide or show items"><svg class="icon"><use href="#i-eye"/></svg><i class="caret"></i></button>
                        <button aria-label="Edit appearance"><svg class="icon"><use href="#i-appear"/></svg></button>
                        <button aria-label="Apply scene"><svg class="icon"><use href="#i-scene"/></svg><i class="caret"></i></button>
                        <button aria-label="View settings"><svg class="icon"><use href="#i-monitor"/></svg><i class="caret"></i></button>
                    </div>
                    <div class="doc-controls">
                        <button aria-label="Dock left"><svg class="icon-s"><use href="#i-dockl"/></svg></button>
                        <button aria-label="Dock right"><svg class="icon-s"><use href="#i-dockr"/></svg></button>
                        <button aria-label="Minimize document"><svg class="icon-s"><use href="#i-min"/></svg></button>
                        <button aria-label="Restore document"><svg class="icon-s"><use href="#i-restore"/></svg></button>
                        <button aria-label="Close document"><svg class="icon-s"><use href="#i-close"/></svg></button>
                    </div>
                </div>

                <svg class="model" viewBox="0 0 808 538" width="808" height="538">
                    <path fill-rule="evenodd" d="M28.500.5h751v94h28v81h-28v187h28v81h-28v94h-751v-94h-28v-81h28v-187h-28v-81h28z
                        M83.500 96.500h108v48h-108z M200.500 96.500h108v48h-108z M83.500 152.500h108v49h-108z M200.500 152.500h108v49h-108z
                        M498.500 96.500h109v48h-109z M615.500 96.500h109v48h-109z M498.500 152.500h109v49h-109z M615.500 152.500h109v49h-109z
                        M498.500 209.500h109v48h-109z M615.500 209.500h109v48h-109z M390.500 228.500h26v80h-26z"/>
                </svg>

                <svg class="triad" viewBox="0 0 60 60" width="60" height="60">
                    <path d="M11 20h6v28h-6z" fill="#7cc07c" stroke="#1b5e20" stroke-width="1.500"/>
                    <path d="M14 10l6 12H8z" fill="#1f6f24"/>
                    <path d="M16 44h26v6H16z" fill="#f28080" stroke="#8e1a1a" stroke-width="1.500"/>
                    <path d="M51 47l-11 6V41z" fill="#b51d1d"/>
                    <circle cx="14" cy="47" r="6" fill="#14148c"/>
                    <text x="14" y="7" fill="#2c8a2c" text-anchor="middle">Y</text>
                    <text x="55" y="51" fill="#d23030" text-anchor="middle">X</text>
                </svg>
                <div class="view-name">*Front</div>

                <div class="task-pane">
                    <button aria-label="Resources"><svg class="icon"><use href="#i-home"/></svg></button>
                    <button aria-label="Design library"><svg class="icon"><use href="#i-books"/></svg></button>
                    <button aria-label="File explorer"><svg class="icon"><use href="#i-folder2"/></svg></button>
                    <button aria-label="View palette"><svg class="icon"><use href="#i-palette"/></svg></button>
                    <button class="current" aria-label="Appearances"><svg class="icon"><use href="#i-sphere"/></svg></button>
                    <button aria-label="Custom properties"><svg class="icon"><use href="#i-props"/></svg></button>
                    <button aria-label="Forum"><svg class="icon"><use href="#i-chat"/></svg></button>
                </div>
            </section>
        </main>

        <div class="study-tabs">
            <div class="steps">
                <button aria-label="First"><svg viewBox="0 0 16 16"><path d="M4 3h2v10H4zM12 3v10L7 8z"/></svg></button>
                <button aria-label="Previous"><svg viewBox="0 0 16 16"><path d="M11 3v10L5 8z"/></svg></button>
                <button aria-label="Next"><svg viewBox="0 0 16 16"><path d="M5 3v10l6-5z"/></svg></button>
                <button aria-label="Last"><svg viewBox="0 0 16 16"><path d="M4 3v10l5-5zM10 3h2v10h-2z"/></svg></button>
            </div>
            <button class="current">Model</button>
            <button class="study">Motion Study 1</button>
            <div class="fill"></div>
        </div>

        <footer class="status">
            <span class="edition">SOLIDWORKS Student Edition - Academic Use Only</span>
            <span class="cell spacer"></span>
            <span class="cell">Editing Part</span>
            <span class="cell light"><svg class="icon-s"><use href="#i-traffic"/></svg></span>
            <span class="cell units">MMGS<i class="caret up"></i></span>
            <svg class="icon"><use href="#i-tag"/></svg>
            <svg class="grip" viewBox="0 0 12 12" width="12" height="12"><path d="M9 1h3v3H9zM5 5h3v3H5zM9 5h3v3H9zM1 9h3v3H1zM5 9h3v3H5zM9 9h3v3H9z" fill="#b8b8b8"/></svg>
        </footer>
    </div>
</body>
</html>
```

FILE: styles.css
```css
:root {
    --panel: #f6f6f6;
    --line: #84888c;
    --soft-line: #c4c4c4;
    --tab: #d5d5d5;
    --text: #1c1c1c;
    --accent: #2b5f8c;
}

* {
    margin: 0;
    padding: 0;
    box-sizing: border-box;
}

body {
    font-family: "Noto Sans", "Open Sans", sans-serif;
    font-size: 13px;
    line-height: 19px;
    color: var(--text);
}

button {
    font: inherit;
    color: inherit;
    background: none;
    border: none;
    white-space: nowrap;
}

input {
    font: inherit;
    border: none;
    outline: none;
    background: none;
    min-width: 0;
}

svg {
    display: block;
    flex: none;
}

.sprite {
    position: absolute;
    width: 0;
    height: 0;
}

/* icon paints */
.b {
    fill: url(#steel);
    stroke: #24333c;
}

.w {
    fill: url(#silver);
    stroke: #3c3c3c;
}

.k {
    fill: none;
    stroke: #3c3c3c;
}

.icon {
    width: 19px;
    height: 19px;
}

.icon-s {
    width: 14px;
    height: 14px;
}

.icon-l {
    width: 24px;
    height: 24px;
}

.caret {
    border: 3px solid transparent;
    border-top: 4px solid #444;
    border-bottom: none;
    flex: none;
}

.caret.up {
    border-top: none;
    border-bottom: 4px solid #444;
}

.dot {
    width: 7px;
    height: 7px;
    border-radius: 50%;
    border: 1px solid #999;
    background: #d8d8d8;
}

.window {
    display: flex;
    flex-direction: column;
    height: 100vh;
    border: 1px solid var(--accent);
    border-bottom: 2px solid #1668a8;
    background: var(--panel);
}

/* title bar */
.titlebar {
    position: relative;
    display: flex;
    align-items: stretch;
    height: 41px;
    padding-left: 183px;
    border-top: 8px solid #fff;
    border-bottom: 1px solid var(--line);
}

.logo {
    position: absolute;
    left: 10px;
    top: 0;
    width: 145px;
    height: 37px;
    display: flex;
    align-items: center;
    gap: 5px;
    padding-left: 6px;
    border: 1px solid #8f9294;
    border-top: none;
    background: linear-gradient(160deg, #fff 45%, #d4d4d4);
    color: #d5212a;
    font-family: Lato, sans-serif;
    font-size: 16px;
    font-style: italic;
    z-index: 1;
}

.logo b {
    font-weight: 900;
}

.logo-mark {
    width: 28px;
    height: 28px;
}

.menu {
    display: flex;
    gap: 16px;
}

.pin {
    margin-left: 23px;
    padding-right: 9px;
    border-right: 2px solid #a6a6a6;
}

.quick {
    display: flex;
    align-items: center;
    padding-left: 14px;
}

.split {
    display: flex;
    align-items: center;
    justify-content: space-between;
    width: 39px;
    padding-right: 6px;
}

.split.off {
    opacity: 0.8;
}

.off .caret {
    border-top-color: #aaa;
}

.split.pressed {
    height: 26px;
    padding: 0;
    border: 1px solid #5f8ca6;
}

.pressed span {
    padding: 3px;
    background: #cfcfcf;
    border-right: 1px solid #5f8ca6;
}

.pressed .caret {
    margin-right: 3px;
}

.single {
    padding: 0 3px;
}

.doc-title {
    flex: 1;
    text-align: center;
    line-height: 34px;
}

.search {
    display: flex;
    align-items: center;
    width: 252px;
    margin: 2px 0 1px;
    padding: 0 5px;
    border: 1px solid #c8bfb4;
}

.help-dot {
    width: 16px;
    height: 16px;
    margin-right: 10px;
    border: 1px solid #444;
    border-radius: 50%;
    color: #2b7399;
    font-weight: 700;
    line-height: 14px;
    text-align: center;
}

.search input {
    flex: 1;
    height: 26px;
    padding-left: 1px;
    background: #ededf1;
}

.search input::placeholder {
    color: #6a6a6a;
}

.search button {
    display: flex;
    align-items: center;
    gap: 6px;
    margin-left: 4px;
}

.win-controls {
    display: flex;
    align-items: center;
    gap: 12px;
    padding: 0 6px 0 12px;
    color: #555;
}

.help {
    display: flex;
    align-items: center;
    gap: 11px;
    font-size: 17px;
    font-weight: 700;
}

/* ribbon */
.ribbon {
    display: flex;
    height: 87px;
    padding: 6px 0 2px 5px;
    border-bottom: 1px solid var(--line);
}

.group {
    display: flex;
    padding-right: 9px;
    border-right: 1px solid var(--soft-line);
}

.group.last {
    border-right: none;
}

.big {
    display: flex;
    flex-direction: column;
    align-items: center;
    gap: 1px;
    min-width: 66px;
    padding: 13px 4px 0;
}

.big.drop {
    min-width: 42px;
    padding-top: 6px;
}

.drop .caret {
    margin-top: 19px;
}

.big.active {
    margin-left: 2px;
    padding: 12px 4px 0;
    border: 1px solid #5f8ca6;
    background: #cfcfcf;
}

.stack {
    display: flex;
    flex-direction: column;
    margin-left: 3px;
}

.stack + .stack {
    margin-left: 12px;
}

.stack button {
    display: flex;
    align-items: center;
    gap: 7px;
    height: 26px;
}

/* left side */
.workspace {
    flex: 1;
    display: flex;
    min-height: 0;
}

.side {
    position: relative;
    display: flex;
    flex-direction: column;
    width: 362px;
    border-right: 1px solid var(--line);
}

.cmd-tabs {
    display: flex;
    height: 28px;
    font-size: 14px;
}

.cmd-tabs button {
    padding: 0 9px;
    background: var(--tab);
    border: 1px solid var(--line);
    border-top: none;
    border-left: none;
}

.cmd-tabs .current {
    padding: 0 8px 0 10px;
    background: none;
    font-weight: 700;
}

.side-body {
    flex: 1;
    display: flex;
    align-items: flex-start;
    min-height: 0;
}

.tools {
    display: flex;
    flex-direction: column;
    align-items: center;
    padding-top: 13px;
    border-bottom: 1px solid var(--line);
    background: radial-gradient(circle, #aaa 1px, transparent 1px) 3px 1px / 4px 4px repeat-x;
}

.tools button {
    display: flex;
    align-items: center;
    height: 26px;
}

.tools hr {
    width: 25px;
    margin: 3px 0 4px;
    border: none;
    border-top: 1px solid var(--line);
}

.tools-ref {
    width: 34px;
    padding-top: 12px;
    padding-bottom: 7px;
    border-right: 1px solid var(--line);
    border-top: 1px solid var(--line);
}

.tools-surf {
    width: 32px;
    margin-left: -1px;
    padding-bottom: 7px;
    border-left: 1px solid var(--line);
}

.manager {
    flex: 1;
    align-self: stretch;
    display: flex;
    flex-direction: column;
    min-width: 0;
    padding: 2px 2px 2px 1px;
}

.splitbar {
    display: flex;
    align-items: center;
    justify-content: center;
    height: 16px;
    border-top: 1px solid var(--soft-line);
    border-bottom: 1px solid var(--soft-line);
}

.manager-tabs {
    display: flex;
    margin-top: 4px;
    height: 33px;
    border-bottom: 1px solid var(--soft-line);
}

.manager-tabs button {
    display: flex;
    align-items: center;
    justify-content: center;
    width: 40px;
    height: 28px;
    padding-bottom: 4px;
    background: var(--tab);
    border: 1px solid var(--line);
    border-left: none;
}

.manager-tabs .current {
    width: 39px;
    background: none;
    border-bottom: none;
}

.manager-tabs .more {
    width: 14px;
    margin: 0 2px 0 auto;
    background: none;
    border: none;
}

.filter {
    display: flex;
    align-items: center;
    height: 32px;
    margin: 0 1px 0 3px;
    padding-left: 2px;
    border: 1px solid var(--soft-line);
    border-top: none;
}

.filter input {
    flex: 1;
}

.tree {
    list-style: none;
    font-size: 14px;
    border-bottom: 3px solid #1e6fae;
}

.tree li {
    position: relative;
    display: flex;
    align-items: center;
    gap: 5px;
    height: 28px;
    padding-left: 24px;
    overflow: hidden;
    white-space: nowrap;
}

.tree .root {
    padding-left: 1px;
}

.tree .open::before {
    content: "";
    position: absolute;
    left: 7px;
    border: 4px solid transparent;
    border-left: 5px solid #555;
    border-right: none;
}

.scrollbar {
    display: flex;
    height: 19px;
    margin-top: auto;
    background: #f0f0f0;
}

.scrollbar svg {
    width: 19px;
    height: 19px;
}

.track {
    flex: 1;
}

.thumb {
    width: 88%;
    height: 100%;
    background: #cbcbcb;
}

.handle {
    position: absolute;
    right: -9px;
    top: 429px;
    display: flex;
    align-items: center;
    width: 9px;
    height: 39px;
    border: 1px solid var(--line);
    border-left: none;
    background: var(--panel);
    z-index: 1;
}

/* graphics area */
.viewport {
    position: relative;
    flex: 1;
    overflow: hidden;
    background:
        radial-gradient(ellipse 45% 50% at 100% 105%, rgba(240, 242, 247, 0.9), transparent),
        linear-gradient(180deg, transparent 50%, #fff 70%),
        radial-gradient(ellipse 70% 52% at 8% 0%, #fff 58%, transparent),
        radial-gradient(ellipse 30% 60% at 105% 0%, rgba(247, 247, 249, 0.9), transparent),
        linear-gradient(90deg, #e2e6ef, #dadde8 75%, #dfe2eb);
}

.view-bar {
    position: relative;
    display: flex;
    justify-content: center;
    padding: 6px 4px 0 0;
}

.view-tools {
    display: flex;
    opacity: 0.8;
}

.view-tools button {
    display: flex;
    align-items: center;
    gap: 7px;
    padding: 0 4px 0 3px;
}

.view-tools .caret {
    margin-right: 1px;
    border-top-color: #777;
}

.doc-controls {
    position: absolute;
    right: 12px;
    top: 8px;
    display: flex;
    gap: 12px;
    color: #8d9096;
}

.model {
    position: absolute;
    left: 232px;
    top: 227px;
    fill: #51535e;
    stroke: #08080a;
}

.triad {
    position: absolute;
    left: 37px;
    bottom: 55px;
    overflow: visible;
    font-size: 13px;
}

.view-name {
    position: absolute;
    left: 12px;
    bottom: 3px;
    font-family: Lato, sans-serif;
    font-size: 16px;
    font-weight: 700;
}

.task-pane {
    position: absolute;
    right: 0;
    top: 59px;
    display: flex;
    flex-direction: column;
    border: 1px solid var(--line);
    border-right: none;
}

.task-pane button {
    display: flex;
    align-items: center;
    justify-content: center;
    width: 32px;
    height: 30px;
    background: var(--tab);
    border-bottom: 1px solid var(--line);
}

.task-pane button:last-child {
    height: 29px;
    border-bottom: none;
}

.task-pane .current {
    background: #fafafa;
}

/* bottom */
.study-tabs {
    display: flex;
    height: 21px;
    padding-left: 67px;
    border-bottom: 1px solid var(--line);
    font-size: 14px;
}

.steps {
    display: flex;
    border-top: 1px solid #222;
}

.steps button {
    width: 20px;
    padding: 1px;
    background: #aaadc4;
    border: 1px solid #8085a0;
    fill: #7b7f98;
}

.steps svg {
    width: 16px;
    height: 16px;
}

.study-tabs .current {
    padding: 0 12px 0 18px;
    font-size: 15px;
    font-weight: 700;
    color: #000;
}

.study {
    padding: 0 31px 0 14px;
    background: var(--tab);
    border: 1px solid var(--line);
    border-bottom: none;
}

.fill {
    flex: 1;
    border-top: 1px solid var(--line);
}

.status {
    display: flex;
    align-items: center;
    height: 20px;
    padding: 2px 3px 0 1px;
    font-size: 14px;
}

.edition {
    flex: 1;
}

.cell {
    display: flex;
    align-items: center;
    height: 18px;
    padding: 0 7px 0 4px;
    border-left: 1px solid var(--soft-line);
}

.spacer {
    padding: 0 7px 0 0;
}

.light {
    padding: 0 4px 0 14px;
}

.units {
    gap: 26px;
    padding: 0 65px 0 38px;
}

.grip {
    margin: 6px 0 0 10px;
}
```
